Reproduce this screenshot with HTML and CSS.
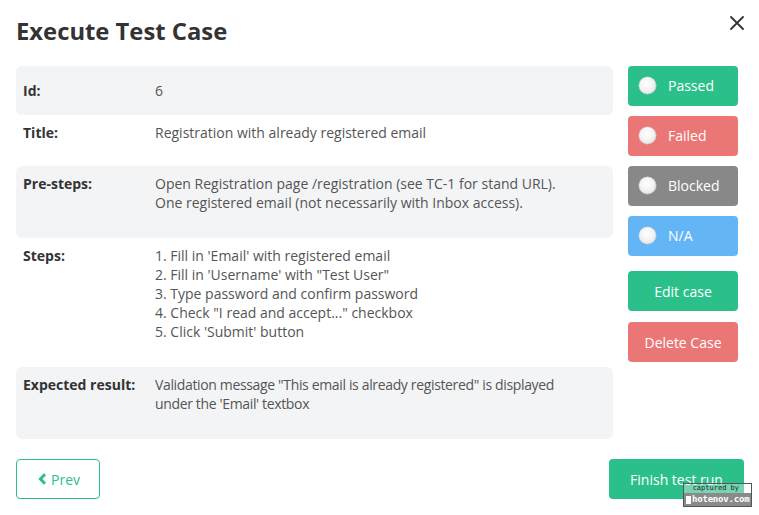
FILE: index.html
```html
<!DOCTYPE html>
<html>
<head>
<meta charset="utf-8">
<link rel="stylesheet" href="styles.css">
</head>
<body>
<div class="modal">
  <div class="header">
    <h1 class="title">Execute Test Case</h1>
    <button class="close" aria-label="Close">
      <svg width="14" height="14" viewBox="0 0 14 14"><path d="M1 1L13 13M13 1L1 13" stroke="#333" stroke-width="1.8" stroke-linecap="round"/></svg>
    </button>
  </div>
  <div class="body">
    <div class="details">
      <div class="row gray row-id"><div class="label">Id:</div><div class="value">6</div></div>
      <div class="row"><div class="label">Title:</div><div class="value">Registration with already registered email</div></div>
      <div class="row gray tall"><div class="label">Pre-steps:</div><div class="value">Open Registration page /registration (see TC-1 for stand URL).<br>One registered email (not necessarily with Inbox access).</div></div>
      <div class="row steps"><div class="label">Steps:</div><div class="value">1. Fill in 'Email' with registered email<br>2. Fill in 'Username' with "Test User"<br>3. Type password and confirm password<br>4. Check "I read and accept..." checkbox<br>5. Click 'Submit' button</div></div>
      <div class="row gray tall"><div class="label">Expected result:</div><div class="value narrow">Validation message "This email is already registered" is displayed<br>under the 'Email' textbox</div></div>
    </div>
    <div class="actions">
      <button class="status green"><span class="radio"></span>Passed</button>
      <button class="status red"><span class="radio"></span>Failed</button>
      <button class="status grey"><span class="radio"></span>Blocked</button>
      <button class="status blue"><span class="radio"></span>N/A</button>
      <button class="action green first">Edit case</button>
      <button class="action red">Delete Case</button>
    </div>
  </div>
  <div class="footer">
    <button class="prev">
      <svg width="9" height="12" viewBox="0 0 9 12"><path d="M7 1.3L2.4 6L7 10.7" fill="none" stroke="#2bbf8a" stroke-width="3" stroke-linejoin="miter"/></svg>
      Prev
    </button>
    <button class="finish">Finish test run</button>
  </div>
  <div class="watermark"><span class="wm-top">captured by</span><span class="wm-bottom"><span class="wm-sq"></span>hotenov.com</span></div>
</div>
</body>
</html>
```
FILE: styles.css
```css
* { box-sizing: border-box; }
html, body { margin: 0; padding: 0; background: #fff; }
body { font-family: "Open Sans", "Liberation Sans", sans-serif; color: #333; font-size: 14px; }
.modal { position: relative; width: 759px; height: 515px; padding: 14px 15px 0 16px; }
.header { display: flex; justify-content: space-between; align-items: flex-start; }
.title { margin: 0; font-size: 23.8px; font-weight: 700; line-height: 34px; color: #333; }
.close { border: 0; background: none; padding: 0; margin: 2px 0 0 0; width: 14px; height: 14px; display: flex; }
.body { display: flex; gap: 15px; margin-top: 18px; }
.details { width: 597px; display: flex; flex-direction: column; }
.row { display: flex; padding: 8px 7px 24px; line-height: 19px; border-radius: 6px; }
.row.gray { background: #f3f4f6; }
.row.tall { padding-bottom: 26px; }
.row-id { padding: 15px 7px 15px; }
.row.steps { padding-bottom: 26px; }
.label { width: 132px; flex: none; font-weight: 700; color: #333; }
.value { color: #555; }
.value.narrow { letter-spacing: -0.35px; }
.actions { width: 110px; display: flex; flex-direction: column; gap: 10px; }
button { font-family: inherit; cursor: pointer; }
.status, .action { height: 40px; border: 0; border-radius: 4px; color: #fff; font-size: 14px; }
.status { display: flex; align-items: center; padding: 0 0 1px 11px; gap: 12px; }
.action { text-align: center; padding: 0; }
.action.first { margin-top: 5px; }
.action + .action { margin-top: 1px; }
.green { background: #2bbf8a; }
.red { background: #ea7776; }
.grey { background: #888888; }
.blue { background: #63b5f6; }
.radio { width: 17px; height: 17px; border-radius: 50%; background: radial-gradient(circle at 45% 40%, #ffffff 0%, #f4f4f4 45%, #d6d6d6 100%); box-shadow: 0 0 0 0.5px #c8c8c8; flex: none; }
.footer { display: flex; justify-content: space-between; margin-top: 20px; }
.prev { width: 84px; height: 40px; border: 1px solid #2bbf8a; background: #fff; color: #2bbf8a; border-radius: 4px; font-size: 14px; display: flex; align-items: center; justify-content: center; gap: 4px; padding: 0 0 0 2px; }
.finish { width: 135px; height: 40px; border: 0; border-radius: 4px; background: #2bbf8a; color: #fff; font-size: 14px; }
.watermark { position: absolute; left: 683px; top: 483px; width: 69px; height: 24px; border: 1px solid #555; display: flex; flex-direction: column; font-family: "DejaVu Sans Mono", monospace; }
.wm-top { height: 9px; font-size: 7px; line-height: 9px; color: #222; text-align: right; padding-right: 12px; background: rgba(255,255,255,0.35); }
.wm-bottom { flex: 1; font-size: 9px; line-height: 13px; letter-spacing: -0.2px; font-weight: 700; color: #fff; background: #8a8a8a; display: flex; align-items: center; padding-left: 2px; white-space: nowrap; }
.wm-sq { width: 5px; height: 8px; background: #fff; margin-right: 1px; flex: none; }
```
